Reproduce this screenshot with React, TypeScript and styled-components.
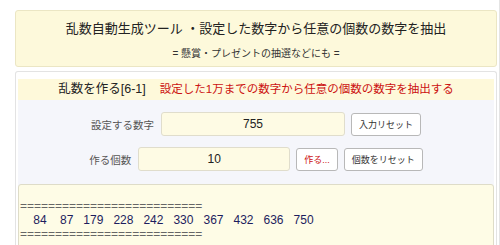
import React from 'react';
import styled, {createGlobalStyle} from 'styled-components';

const GlobalStyle = createGlobalStyle`
  body {
    margin: 0;
    background: #fff;
    font-family: "Liberation Sans", "Noto Sans CJK JP", sans-serif;
    color: #222;
  }
`;

const Page = styled.div`
  width: 482px;
  padding: 10px 2px 0 15px;
  border-right: 1px solid #e4e4e4;
  min-height: 235px;
`;

const Header = styled.header`
  background: #fdf9db;
  border: 1px solid #ebe6c4;
  border-radius: 3px;
  padding: 9px 0 5px;
  text-align: center;
`;
const Title = styled.h1`
  margin: 0;
  font-size: 13px;
  line-height: 18px;
  font-weight: normal;
  color: #222;
`;
const SubTitle = styled.p`
  margin: 9px 0 0;
  font-size: 10px;
  line-height: 14px;
  color: #333;
`;

const Panel = styled.section`
  margin-top: 4px;
  border: 1px solid #e3e3e3;
  border-bottom: none;
  border-radius: 3px 3px 0 0;
  padding: 7px 2px 0;
  background: #fff;
`;
const PanelTitle = styled.div`
  height: 21px;
  line-height: 21px;
  background: #fef9da;
  text-align: center;
  font-size: 12.5px;
  color: #222;
  white-space: nowrap;
`;
const Lead = styled.span`
  margin-left: 14px;
  font-size: 11.5px;
  color: #cc1111;
`;

const Form = styled.div`
  background: #f5f6fb;
  padding-top: 12px;
  display: flex;
  flex-direction: column;
  gap: 11px;
`;
const Row = styled.div`
  display: flex;
  align-items: center;
  justify-content: center;
  gap: 6px;
`;
const Label = styled.label`
  font-size: 10.5px;
  color: #555;
  margin-right: 1px;
`;
const NumberInput = styled.input<{$width: number}>`
  box-sizing: border-box;
  width: ${({$width}) => $width}px;
  height: 24px;
  border: 1px solid #e0ddcc;
  border-radius: 3px;
  background: #fefbe4;
  text-align: center;
  font-family: "Liberation Sans", "Noto Sans CJK JP", sans-serif;
  font-size: 12px;
  color: #222;
  outline: none;
`;
const Button = styled.button<{$danger?: boolean}>`
  box-sizing: border-box;
  height: 23px;
  padding: 0 7px;
  border: 1px solid #b8b8b8;
  border-radius: 3px;
  background: #fff;
  font-family: "Liberation Sans", "Noto Sans CJK JP", sans-serif;
  font-size: 9px;
  color: ${({$danger}) => ($danger ? '#cc1111' : '#333')};
  white-space: nowrap;
`;

const Output = styled.div`
  margin-top: 2px;
  height: 80px;
  border: 1px solid #dedcc8;
  border-radius: 3px 3px 0 0;
  background: #fefce6;
  padding: 0 1px;
  font-size: 12px;
  line-height: 14px;
  white-space: pre;
`;
const Rule = styled.div`
  color: #666;
`;
const Numbers = styled.div`
  color: #1d1d5e;
`;

const picked = [84, 87, 179, 228, 242, 330, 367, 432, 636, 750];

// two-digit numbers get one more leading space than three-digit ones
const pad = (n: number) => ' '.repeat(String(n).length < 3 ? 4 : 3) + n;

export default function App() {
  const rule = '='.repeat(26);
  return (
    <>
      <GlobalStyle />
      <Page>
        <Header>
          <Title>乱数自動生成ツール ・設定した数字から任意の個数の数字を抽出</Title>
          <SubTitle>= 懸賞・プレゼントの抽選などにも =</SubTitle>
        </Header>
        <Panel>
          <PanelTitle>
            乱数を作る[6-1]
            <Lead>設定した1万までの数字から任意の個数の数字を抽出する</Lead>
          </PanelTitle>
          <Form>
            <Row>
              <Label>設定する数字</Label>
              <NumberInput $width={184} defaultValue="755" />
              <Button>入力リセット</Button>
            </Row>
            <Row>
              <Label>作る個数</Label>
              <NumberInput $width={152} defaultValue="10" />
              <Button $danger>作る...</Button>
              <Button>個数をリセット</Button>
            </Row>
            <Output>
              <div> </div>
              <Rule>{rule}</Rule>
              <Numbers>{picked.map((n) => pad(n)).join('')}</Numbers>
              <Rule>{rule}</Rule>
            </Output>
          </Form>
        </Panel>
      </Page>
    </>
  );
}
